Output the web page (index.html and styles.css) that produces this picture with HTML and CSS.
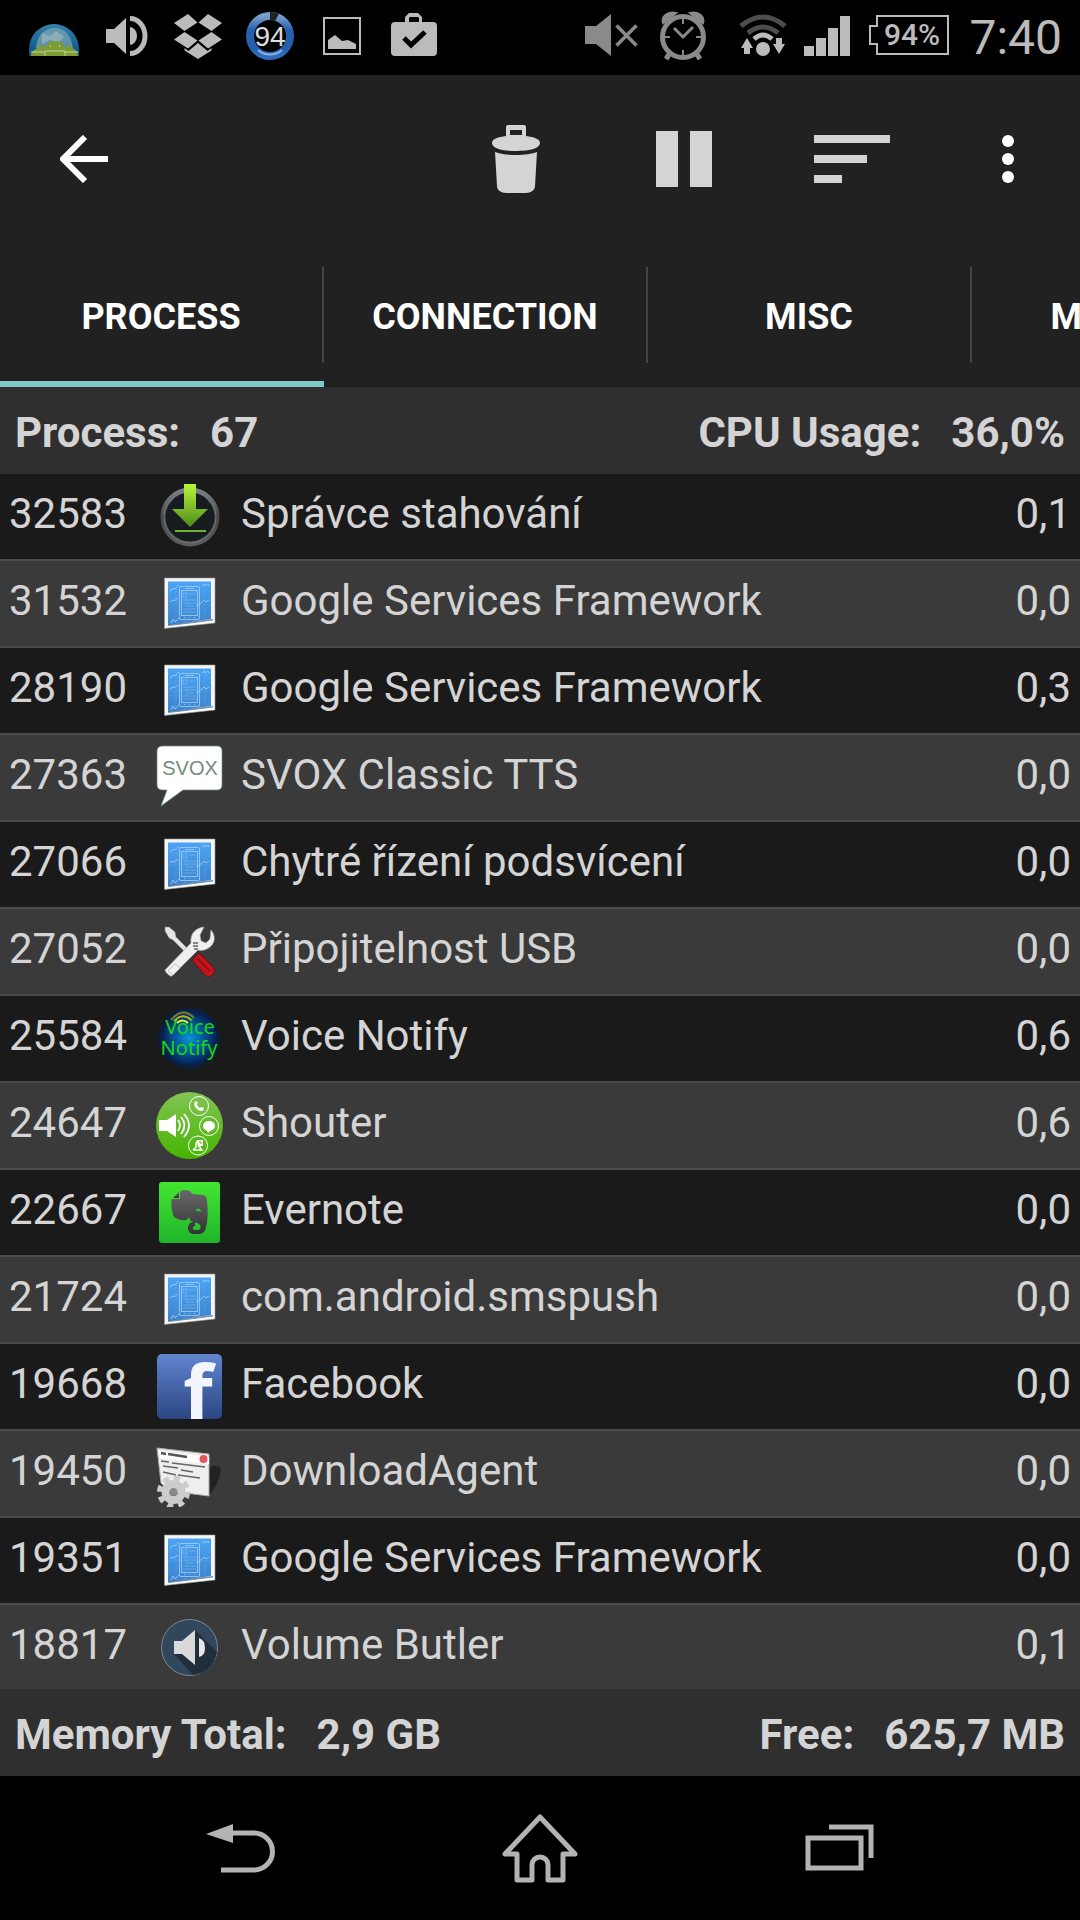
FILE: index.html
```html
<!DOCTYPE html>
<html lang="cs">
<head>
    <meta charset="utf-8">
    <meta name="viewport" content="width=device-width, initial-scale=1">
    <title>OS Monitor</title>
    <link rel="stylesheet" href="styles.css">
</head>
<body>
    <!-- shared icon for apps without their own -->
    <svg class="defs" width="0" height="0" aria-hidden="true">
        <defs>
            <linearGradient id="blue" x1="0" y1="0" x2="0" y2="1"><stop offset="0" stop-color="#4ba3f5"/><stop offset="1" stop-color="#3c84cc"/></linearGradient>
            <symbol id="blueprint" viewBox="0 0 68 68">
                <path d="M8.500 9h50.500v45l-50.500 5.500z" fill="#f3f5f6" stroke="#999" stroke-width=".6"/>
                <path d="M12 12.500h43v37.500l-43 6z" fill="url(#blue)"/>
                <path d="M12 55.500L57 50v2L12 57z" fill="#244e7c" opacity=".6"/>
                <path d="M10 58l47-6.500v2z" fill="#fff"/>
                <g fill="none" stroke="#a5d2fb" stroke-width=".8">
                    <rect x="23.500" y="17.500" width="20" height="33" rx="1.500"/>
                    <rect x="25.500" y="21.500" width="16" height="25"/>
                    <path d="M29 19.500h9M28 48.500h1M33 48.500h1M38 48.500h1"/>
                    <path d="M27 24h4v4h-4zM33 25h6M27 31h13M27 34h13M30 37h8M27 40h13M27 43h13" opacity=".5"/>
                    <path d="M14 22l4-3 1 1 4-4M14 33l3-2 1 1 4-3M46 17l2-2 1 2 3-2 1 2M40 37l6-4 2-2 2 2 3-2M15 54l2-4 2 3 4-4"/>
                </g>
                <path d="M12 35h43M30 12.500v42M20 12.500v42M49 12.500v38" stroke="#77b9f7" stroke-width=".5" opacity=".4"/>
            </symbol>
        </defs>
    </svg>

    <header class="status">
        <div class="status-group">
            <svg width="72" height="76" viewBox="0 0 72 76">
                <defs><linearGradient id="moon" x1="0" y1="0" x2="0" y2="1"><stop offset="0" stop-color="#3682a8"/><stop offset="1" stop-color="#05508a"/></linearGradient></defs>
                <path d="M11 56V49a25 25 0 0 1 50 0v7z" fill="url(#moon)"/>
                <path d="M18 50c0-14 8-22 19-22 10 0 17 8 18 22z" fill="#7aa3b4" opacity=".75"/>
                <path d="M24 33l8 3 6-5 8 6-5 5-9-2-8 4z" fill="#a9bac0" opacity=".6"/>
                <path d="M13 56c0-4 3-7 6-7l3-5 4 4 5-6 6-1 6 1 5 6 4-4 3 5c3 0 5 3 5 7z" fill="#7d9c35"/>
                <path d="M13 52h14v4M27 51h20v5M47 52h13" fill="none" stroke="#c4d49a" stroke-width="1"/>
                <path d="M32 46h1M41 46h1" stroke="#fff" stroke-width="1"/>
            </svg>
            <svg width="72" height="76" viewBox="0 0 72 76" fill="#bbb">
                <path d="M16 29h8l12-11v36L24 43h-8zM40 27a7 9 0 0 1 0 18z"/>
                <path d="M40 18.500a15 17.500 0 0 1 0 35" fill="none" stroke="#bbb" stroke-width="5"/>
            </svg>
            <svg width="72" height="76" viewBox="0 0 72 76" fill="#bbb">
                <path d="M26 14l9.500 8.500-13 8.500L12 23zM46 14l14 9-10.500 8-13-8.500zM22.500 32l13 8.500-9.500 8-14-9zM49.500 32L60 39.500l-14 9-9.500-8zM36 43l9.500 8 4-3v2.500L36 59 22.500 50.500V48l4 3z"/>
            </svg>
            <svg width="72" height="76" viewBox="0 0 72 76">
                <defs><linearGradient id="ring" x1="0" y1="0" x2="0" y2="1"><stop offset="0" stop-color="#7aa1cc"/><stop offset=".35" stop-color="#2460ad"/><stop offset=".8" stop-color="#2460ad"/><stop offset="1" stop-color="#2d6dbb"/></linearGradient></defs>
                <circle cx="36" cy="36" r="20" fill="none" stroke="url(#ring)" stroke-width="8"/>
                <path d="M24 50a18 18 0 0 0 24 0" fill="none" stroke="#8db2dc" stroke-width="2"/>
                <path d="M36 12a24 24 0 0 1 9 2l-4 7a16 16 0 0 0-5-1z" fill="#222"/>
                <text class="ring-text" x="36" y="46" text-anchor="middle">94</text>
            </svg>
            <svg width="72" height="76" viewBox="0 0 72 76" fill="#bbb">
                <path fill-rule="evenodd" d="M17 17h38v38H17zM19 19v34h34V19z"/>
                <path d="M22 49v-9l7-5 7 6 6-1 8 4v5z"/>
            </svg>
            <svg width="72" height="76" viewBox="0 0 72 76">
                <path fill="#bbb" fill-rule="evenodd" d="M17 22h10v-5l4-4h9l4 4v5h11a4 4 0 0 1 4 4v26a4 4 0 0 1-4 4H17a4 4 0 0 1-4-4V26a4 4 0 0 1 4-4zM31 22h10v-4l-1-1h-8l-1 1z"/>
                <path d="M26 38l7 7 14-13" fill="none" stroke="#000" stroke-width="5"/>
            </svg>
        </div>
        <div class="status-group">
            <svg width="72" height="76" viewBox="0 0 72 76">
                <path d="M14 26h11l15-12v42L25 44H14z" fill="#8a8a8a"/>
                <path d="M45.500 25.500l20 20M65.500 25.500l-20 20" stroke="#8a8a8a" stroke-width="3.500"/>
            </svg>
            <svg width="72" height="76" viewBox="0 0 72 76">
                <circle cx="40" cy="37" r="20.500" fill="none" stroke="#8a8a8a" stroke-width="5"/>
                <path d="M20 23c-2-6 4-12 13-10zM60 23c2-6-4-12-13-10z" fill="#8a8a8a" stroke="#8a8a8a" stroke-width="2"/>
                <path d="M27 53l-4 6M53 53l4 6" stroke="#8a8a8a" stroke-width="5"/>
                <path d="M40 18v6M40 50v6M21 37h6M53 37h6" stroke="#8a8a8a" stroke-width="2"/>
                <path d="M31 28l9 9 10-10" fill="none" stroke="#8a8a8a" stroke-width="3"/>
            </svg>
            <svg width="72" height="76" viewBox="0 0 72 76">
                <g fill="none" stroke-width="5">
                    <path d="M26 26q22-18 44 0" stroke="#4d4d4d"/>
                    <path d="M33 33q15-12 30 0" stroke="#4d4d4d"/>
                    <path d="M39 39q9-8 18 0" stroke="#bbb"/>
                </g>
                <circle cx="48" cy="49" r="7" fill="#bbb"/>
                <path d="M32 38l6 10h-3v6h-6v-6h-3zM64 54l6-10h-3v-6h-6v6h-3z" fill="#bbb"/>
            </svg>
            <svg width="72" height="76" viewBox="0 0 72 76" fill="#bbb">
                <path d="M17 46h10v10H17zM29 38h10v18H29zM41 28h10v28H41zM53 16h10v40H53z"/>
            </svg>
            <div class="battery">
                <svg class="battery-frame" width="82" height="42" viewBox="0 0 82 42"><path d="M9 2h71v38H9V30H2V12h7z" fill="none" stroke="#bbb" stroke-width="2"/></svg>
                <span class="battery-text">94%</span>
            </div>
            <time class="clock">7:40</time>
        </div>
    </header>

    <div class="toolbar">
        <button class="tool back" type="button" aria-label="Back">
            <svg width="48" height="48" viewBox="0 0 48 48"><path d="M48 24H4M25 2L3 24l22 22" fill="none" stroke="#fff" stroke-width="6"/></svg>
        </button>
        <button class="tool" type="button" aria-label="Delete">
            <svg width="72" height="72" viewBox="0 0 72 72" fill="#d4d4d4"><path fill-rule="evenodd" d="M26 13V4q0-2 2-2h16q2 0 2 2v9c8 1 14 3 14 7 0 5-9 8-24 8s-24-3-24-8c0-4 6-6 14-7zM30 12h12V7H30z"/><path d="M15 29c10 4 32 4 42 0l-2 34c0 4-4 7-9 7H26c-5 0-9-3-9-7z"/></svg>
        </button>
        <button class="tool" type="button" aria-label="Pause">
            <svg width="72" height="72" viewBox="0 0 72 72"><path d="M8 8h22v56H8zM42 8h22v56H42z" fill="#d4d4d4"/></svg>
        </button>
        <button class="tool" type="button" aria-label="Sort">
            <svg width="78" height="48" viewBox="0 0 78 48"><path d="M1 0h76v8H1zM1 20h53v8H1zM1 40h28v8H1z" fill="#d4d4d4"/></svg>
        </button>
        <button class="tool more" type="button" aria-label="More options">
            <svg width="12" height="48" viewBox="0 0 12 48" fill="#fff"><circle cx="6" cy="6" r="6"/><circle cx="6" cy="24" r="6"/><circle cx="6" cy="42" r="6"/></svg>
        </button>
    </div>

    <nav class="tabs">
        <a class="tab active" href="#process"><span>PROCESS</span></a>
        <a class="tab" href="#connection"><span>CONNECTION</span></a>
        <a class="tab" href="#misc"><span>MISC</span></a>
        <a class="tab" href="#message"><span>MESSAGE</span></a>
    </nav>

    <div class="summary">
        <div class="stat"><span>Process:</span><span>67</span></div>
        <div class="stat"><span>CPU Usage:</span><span>36,0%</span></div>
    </div>

    <main class="list">
        <table class="processes">
            <tr>
                <td class="pid">32583</td>
                <td class="icon">
                    <svg width="68" height="68" viewBox="0 0 68 68">
                        <defs>
                            <linearGradient id="rim" x1="0" y1="0" x2="0" y2="1"><stop offset="0" stop-color="#7a8288"/><stop offset=".5" stop-color="#44474a"/><stop offset="1" stop-color="#5c5c5c"/></linearGradient>
                            <linearGradient id="arrow" x1="0" y1="0" x2="0" y2="1"><stop offset="0" stop-color="#b8f53c"/><stop offset="1" stop-color="#4f8a1c"/></linearGradient>
                        </defs>
                        <circle cx="34" cy="35" r="27" fill="#171c20" stroke="url(#rim)" stroke-width="5"/>
                        <circle cx="34" cy="35" r="26" fill="none" stroke="#777" stroke-width="1"/>
                        <path d="M28 2h12v25h12L34 45 16 27h12z" fill="url(#arrow)"/>
                        <path d="M19 49h31" stroke="#74b32a" stroke-width="2"/>
                    </svg>
                </td>
                <td class="name">Správce stahování</td>
                <td class="cpu">0,1</td>
            </tr>
            <tr>
                <td class="pid">31532</td>
                <td class="icon"><svg width="68" height="68"><use href="#blueprint"/></svg></td>
                <td class="name">Google Services Framework</td>
                <td class="cpu">0,0</td>
            </tr>
            <tr>
                <td class="pid">28190</td>
                <td class="icon"><svg width="68" height="68"><use href="#blueprint"/></svg></td>
                <td class="name">Google Services Framework</td>
                <td class="cpu">0,3</td>
            </tr>
            <tr>
                <td class="pid">27363</td>
                <td class="icon">
                    <svg width="68" height="68" viewBox="0 0 68 68">
                        <path d="M7 3h54q5 0 5 5v34q0 5-5 5H27L5 63l6-16H7q-6 0-6-5V8q0-5 6-5z" fill="#fff" stroke="#6f8f7c" stroke-width=".7"/>
                        <text class="svox" x="34" y="32" text-anchor="middle">SVOX</text>
                    </svg>
                </td>
                <td class="name">SVOX Classic TTS</td>
                <td class="cpu">0,0</td>
            </tr>
            <tr>
                <td class="pid">27066</td>
                <td class="icon"><svg width="68" height="68"><use href="#blueprint"/></svg></td>
                <td class="name">Chytré řízení podsvícení</td>
                <td class="cpu">0,0</td>
            </tr>
            <tr>
                <td class="pid">27052</td>
                <td class="icon">
                    <svg width="68" height="68" viewBox="0 0 68 68">
                        <path d="M9 10l4 0 6 5 1 5 17 17-3 3-17-17-4-2-4-7z" fill="#e4e4e4" stroke="#888" stroke-width=".5"/>
                        <path d="M36 43l7-7 14 14c3 3 1 6-1 8s-5 2-7 0z" fill="#c3151b" stroke="#5c090c" stroke-width=".8"/>
                        <path d="M41 41l13 13" stroke="#8a0c10" stroke-width="1.500"/>
                        <path d="M9 53l26-27c-1-9 4-15 13-16l-4 8 1 6 5 2 4-4 1-9c5 6 4 13-1 17-4 3-8 4-12 3L16 59c-2 1-7-4-7-6z" fill="#efefef" stroke="#aaa" stroke-width=".7"/>
                        <path d="M12 54l7-7 5 4-7 7z" fill="none" stroke="#c4c4c4"/>
                        <path d="M37 26h5M37 29h5M38 32h4" stroke="#666" stroke-width="1.500"/>
                    </svg>
                </td>
                <td class="name">Připojitelnost USB</td>
                <td class="cpu">0,0</td>
            </tr>
            <tr>
                <td class="pid">25584</td>
                <td class="icon">
                    <svg width="68" height="68" viewBox="0 0 68 68">
                        <defs><radialGradient id="glow"><stop offset="0" stop-color="#0696d8"/><stop offset=".5" stop-color="#064f91"/><stop offset=".85" stop-color="#05204f"/><stop offset="1" stop-color="#1a1a1a"/></radialGradient></defs>
                        <circle cx="33" cy="34" r="32" fill="url(#glow)"/>
                        <g fill="none" stroke-width="2">
                            <path d="M15 16q12-14 23-2" stroke="#7a7a28"/><path d="M18 17q9-9 17-1" stroke="#b5b520"/><path d="M21 19q5-5 11 0" stroke="#f2f21c"/>
                        </g>
                        <text class="voice" x="34" y="30" text-anchor="middle">Voice</text>
                        <text class="voice" x="33" y="51" text-anchor="middle">Notify</text>
                    </svg>
                </td>
                <td class="name">Voice Notify</td>
                <td class="cpu">0,6</td>
            </tr>
            <tr>
                <td class="pid">24647</td>
                <td class="icon">
                    <svg width="68" height="68" viewBox="0 0 68 68">
                        <defs><linearGradient id="green" x1="0" y1="0" x2="0" y2="1"><stop offset="0" stop-color="#84c455"/><stop offset="1" stop-color="#45b400"/></linearGradient></defs>
                        <circle cx="33.500" cy="34.500" r="33.500" fill="url(#green)"/>
                        <path d="M3 29h8l9-6v23l-9-6H3z" fill="#fff"/>
                        <g fill="none" stroke="#fff" stroke-width="1.800">
                            <path d="M22 29q4 5 0 11M25 26q7 8 0 17M28 23q10 11 0 23"/>
                            <g stroke-width="1"><circle cx="43" cy="15" r="9.500"/><circle cx="53" cy="35" r="9.500"/><circle cx="42" cy="54.500" r="9.500"/></g>
                        </g>
                        <path d="M40 10c-4 2-1 10 7 10l1-3-3-1-1 1c-2-1-3-3-3-4l1-1z" fill="#fff"/>
                        <ellipse cx="53" cy="35" rx="6" ry="5" fill="#fff"/><path d="M50 38l2 4 4-4z" fill="#fff"/>
                        <path d="M37 59h9l-2-2v-4M37 59l3-3c0-4 0-6 2-6" fill="none" stroke="#fff" stroke-width="1.500"/>
                        <path d="M41 49h6v6h-3l-2 2z" fill="#fff"/><path d="M43 51h2v2" fill="none" stroke="#56b613"/>
                    </svg>
                </td>
                <td class="name">Shouter</td>
                <td class="cpu">0,6</td>
            </tr>
            <tr>
                <td class="pid">22667</td>
                <td class="icon">
                    <svg width="68" height="68" viewBox="0 0 68 68">
                        <defs>
                            <linearGradient id="ever" x1="0" y1="0" x2="0" y2="1"><stop offset="0" stop-color="#43e632"/><stop offset="1" stop-color="#20b52c"/></linearGradient>
                            <linearGradient id="grey" x1="0" y1="0" x2="0" y2="1"><stop offset="0" stop-color="#6a6a6a"/><stop offset="1" stop-color="#333"/></linearGradient>
                        </defs>
                        <rect x="3" y="4" width="61" height="61" rx="3" fill="url(#ever)"/>
                        <path d="M17 20l6-6v6z" fill="url(#grey)"/>
                        <path d="M16 21h8v-7q1-2 4-2c5 0 7 1 8 4l11 1q3 0 4 5c1 10 1 21-1 27-1 5-3 7-8 7h-4c-4 0-6-3-6-6 0-4 3-7 7-6v4c-3 0-3 4 0 4 6 1 7-3 4-6-3-2-7-2-9-4l-1-3c-2 4-5 4-11 2-4-1-5-3-6-9-1-5-1-9 0-11z" fill="url(#grey)"/>
                        <path d="M40 33c0-4 5-3 5 1-2-1-3-1-5-1z" fill="#30c830"/>
                    </svg>
                </td>
                <td class="name">Evernote</td>
                <td class="cpu">0,0</td>
            </tr>
            <tr>
                <td class="pid">21724</td>
                <td class="icon"><svg width="68" height="68"><use href="#blueprint"/></svg></td>
                <td class="name">com.android.smspush</td>
                <td class="cpu">0,0</td>
            </tr>
            <tr>
                <td class="pid">19668</td>
                <td class="icon">
                    <svg width="68" height="68" viewBox="0 0 68 68">
                        <defs>
                            <linearGradient id="fb" x1="0" y1="0" x2="0" y2="1"><stop offset="0" stop-color="#6285cf"/><stop offset="1" stop-color="#2a4682"/></linearGradient>
                        </defs>
                        <rect x="1" y="2" width="65" height="65" rx="5" fill="url(#fb)"/>
                        <text class="fb" x="42" y="67" text-anchor="middle">f</text>
                    </svg>
                </td>
                <td class="name">Facebook</td>
                <td class="cpu">0,0</td>
            </tr>
            <tr>
                <td class="pid">19450</td>
                <td class="icon">
                    <svg width="68" height="68" viewBox="0 0 68 68">
                        <path d="M53 28q12-3 12 3-3 16-12 25z" fill="#222"/>
                        <path d="M1 9l52 6 0 42-40-5-8-8z" fill="#eee" stroke="#aaa" stroke-width="1"/>
                        <path d="M3 12l50 6v7L4 19z" fill="#fff"/>
                        <circle cx="47.500" cy="20" r="4" fill="#e4565c"/>
                        <path d="M5 14l5 1M12 15l19 3" stroke="#555" stroke-width="2.500"/>
                        <path d="M5 22l8 1M16 24l33 4M7 27l15 2M25 31l12 2M7 33l13 3M22 36l22 3" stroke="#666" stroke-width="1.500"/>
                        <circle cx="17.500" cy="53" r="8" fill="none" stroke="#ccc" stroke-width="8"/>
                        <circle cx="17.500" cy="53" r="14" fill="none" stroke="#ccc" stroke-width="5" stroke-dasharray="6 5"/>
                        <circle cx="17.500" cy="53" r="4" fill="#888"/>
                    </svg>
                </td>
                <td class="name">DownloadAgent</td>
                <td class="cpu">0,0</td>
            </tr>
            <tr>
                <td class="pid">19351</td>
                <td class="icon"><svg width="68" height="68"><use href="#blueprint"/></svg></td>
                <td class="name">Google Services Framework</td>
                <td class="cpu">0,0</td>
            </tr>
            <tr>
                <td class="pid">18817</td>
                <td class="icon">
                    <svg width="68" height="68" viewBox="0 0 68 68">
                        <circle cx="33.500" cy="34.500" r="28" fill="#30475c" stroke="#7d8790" stroke-width="1"/>
                        <path d="M39 17l22 22q-4 21-24 23L18 41h16z" fill="#212f3d"/>
                        <path d="M18 28h8l13-11v35L26 41h-8z" fill="#d9d9d9"/>
                        <path d="M43 25q6 2 6 10t-6 9z" fill="#e6e6e6"/>
                    </svg>
                </td>
                <td class="name">Volume Butler</td>
                <td class="cpu">0,1</td>
            </tr>
        </table>
    </main>

    <div class="summary">
        <div class="stat"><span>Memory Total:</span><span>2,9 GB</span></div>
        <div class="stat"><span>Free:</span><span>625,7 MB</span></div>
    </div>

    <footer class="navbar">
        <button class="nav-btn" type="button" aria-label="Back">
            <svg width="80" height="72" viewBox="0 0 80 72"><path d="M6 22l27-10v19z" fill="#b3b3b3"/><path d="M30 21h24a18 18 0 0 1 0 37H21" fill="none" stroke="#b3b3b3" stroke-width="5"/></svg>
        </button>
        <button class="nav-btn" type="button" aria-label="Home">
            <svg width="80" height="72" viewBox="0 0 80 72"><path d="M40 5L5 42h12v26h15V53a8 8 0 0 1 16 0v15h15V42h12z" fill="none" stroke="#b3b3b3" stroke-width="5" stroke-linejoin="round"/></svg>
        </button>
        <button class="nav-btn" type="button" aria-label="Recent apps">
            <svg width="80" height="72" viewBox="0 0 80 72" fill="none" stroke="#b3b3b3" stroke-width="5"><rect x="8" y="26" width="53" height="30"/><path d="M29 15h42v31"/></svg>
        </button>
    </footer>
</body>
</html>
```
FILE: styles.css
```css
* {
    box-sizing: border-box;
}
body {
    margin: 0;
    height: 100vh;
    display: flex;
    flex-direction: column;
    overflow: hidden;
    background-color: #000;
    color: #d4d4d4;
    font-family: Roboto, "Noto Sans", sans-serif;
    font-size: 42px;
}
svg {
    display: block;
    flex: none;
}
.defs {
    position: absolute;
}
button {
    border: none;
    padding: 0;
    background: none;
    cursor: pointer;
}

/* status bar */
.status {
    flex: none;
    display: flex;
    justify-content: space-between;
    height: 75px;
    padding: 0 18px;
    color: #bbb;
}
.status-group {
    display: flex;
}
.battery {
    display: grid;
    align-content: start;
    width: 82px;
    margin-left: 9px;
    padding-top: 14px;
}
.battery-frame, .battery-text {
    grid-area: 1 / 1;
}
.battery-text {
    padding-left: 6px;
    font-size: 30px;
    font-weight: 500;
    line-height: 42px;
    text-align: center;
}
.clock {
    width: 94px;
    margin-left: 18px;
    font-size: 48px;
    line-height: 76px;
    text-align: right;
}
.ring-text {
    font: 28px "Liberation Sans", sans-serif;
    fill: #ddd;
}

/* action bar */
.toolbar {
    flex: none;
    display: flex;
    height: 168px;
    background-color: #212121;
}
.tool {
    display: flex;
    align-items: center;
    justify-content: center;
    width: 168px;
}
.tool.back {
    margin-right: auto;
}
.tool.more {
    width: 144px;
}

/* tabs */
.tabs {
    flex: none;
    display: flex;
    height: 144px;
    overflow: hidden;
    background-color: #212121;
}
.tab {
    flex: 0 0 30%;
    display: flex;
    align-items: center;
    border-bottom: 6px solid transparent;
    padding-top: 6px;
    color: #fff;
    font-size: 36px;
    font-weight: bold;
    text-decoration: none;
}
.tab span {
    flex: 1;
    height: 96px;
    border-right: 2px solid #444;
    line-height: 100px;
    text-align: center;
}
.tab.active {
    border-bottom-color: #80cbc4;
}

/* header and footer of the list */
.summary {
    flex: none;
    display: flex;
    justify-content: space-between;
    height: 87px;
    padding: 4px 15px 0;
    background-color: #2f2f2f;
    font-weight: bold;
    line-height: 83px;
}
.stat {
    display: flex;
    gap: 30px;
}

/* process list */
.list {
    flex: 1;
    min-height: 0;
    overflow-y: auto;
    scrollbar-width: none;
}
.processes {
    width: 100%;
    border-spacing: 0;
    table-layout: fixed;
}
.processes tr {
    background-color: #1a1a1a;
}
.processes tr:nth-child(even) {
    background-color: #3a3a3a;
}
.processes td {
    height: 87px;
    padding: 0 0 6px;
    border-bottom: 2px solid #4b4b4b;
    white-space: nowrap;
}
.processes .pid {
    width: 156px;
    padding-left: 9px;
}
.processes .icon {
    width: 85px;
    padding: 0 0 2px;
}
.processes .cpu {
    width: 120px;
    padding-right: 9px;
    text-align: right;
}
.svox {
    font: 20px "Liberation Sans", sans-serif;
    fill: #6f8f7c;
}
.voice {
    font: 20px "Noto Sans", sans-serif;
    fill: #12d912;
}
.fb {
    font: bold 76px "Noto Sans", sans-serif;
    fill: #f2f5fb;
}

/* system buttons */
.navbar {
    flex: none;
    display: flex;
    justify-content: center;
    height: 144px;
}
.nav-btn {
    display: flex;
    align-items: center;
    justify-content: center;
    width: 300px;
}
```
